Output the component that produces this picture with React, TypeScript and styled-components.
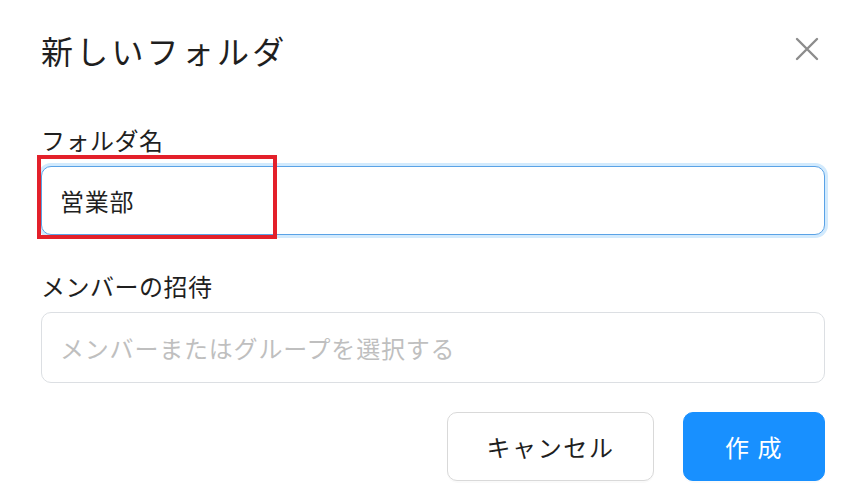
import styled, { createGlobalStyle } from 'styled-components';

const GlobalStyle = createGlobalStyle`
    html, body {
        margin: 0;
        padding: 0;
        background: #ffffff;
    }
    body {
        font-family: "Noto Sans CJK JP", "Noto Sans", sans-serif;
        color: rgba(0, 0, 0, 0.88);
    }
`;

const CloseIcon = () => (
    <svg width="24" height="24" viewBox="0 0 24 24" fill="none">
        <path d="M2 2L22 22M22 2L2 22" stroke="#8c8c8c" strokeWidth="2.4" strokeLinecap="round" />
    </svg>
);

export default function App() {
    return (
        <>
            <GlobalStyle />
            <ModalWrap>
                <Header>
                    <Title>新しいフォルダ</Title>
                    <CloseButton aria-label="閉じる">
                        <CloseIcon />
                    </CloseButton>
                </Header>
                <Field>
                    <Label>フォルダ名</Label>
                    <InputBox>
                        <TextInput $focused defaultValue="営業部" />
                        <Highlight />
                    </InputBox>
                </Field>
                <Field $gap={34}>
                    <Label>メンバーの招待</Label>
                    <InputBox>
                        <TextInput $tall placeholder="メンバーまたはグループを選択する" />
                    </InputBox>
                </Field>
                <Footer>
                    <Button>キャンセル</Button>
                    <Button $primary>作 成</Button>
                </Footer>
            </ModalWrap>
        </>
    );
}

const ModalWrap = styled.div`
    width: 863px;
    height: 502px;
    box-sizing: border-box;
    padding: 0 38px 0 41px;
    display: flex;
    flex-direction: column;
`;

const Header = styled.header`
    display: flex;
    align-items: center;
    justify-content: space-between;
    height: 44px;
    margin-top: 28px;
    margin-bottom: 51px;
`;

const Title = styled.h1`
    margin: 0;
    font-size: 32px;
    font-weight: 400;
    line-height: 44px;
    letter-spacing: 3.2px;
    color: #1f1f1f;
`;

const CloseButton = styled.button`
    border: none;
    background: transparent;
    padding: 0;
    margin-right: 6px;
    margin-top: -2px;
    width: 24px;
    height: 24px;
    display: flex;
    cursor: pointer;
`;

const Field = styled.div<{ $gap?: number }>`
    display: flex;
    flex-direction: column;
    gap: 9px;
    margin-top: ${(p) => p.$gap ?? 0}px;
`;

const Label = styled.label`
    font-size: 24px;
    line-height: 34px;
    letter-spacing: 0.5px;
    color: #1f1f1f;
`;

const InputBox = styled.div`
    position: relative;
`;

const TextInput = styled.input<{ $focused?: boolean; $tall?: boolean }>`
    width: 100%;
    box-sizing: border-box;
    height: ${(p) => (p.$tall ? 71 : 69)}px;
    padding: 0 18px;
    font-family: "Noto Sans CJK JP", "Noto Sans", sans-serif;
    font-size: 24px;
    letter-spacing: 0.8px;
    color: #1f1f1f;
    border-radius: 10px;
    border: 1px solid ${(p) => (p.$focused ? '#5aa2e6' : '#dcdfe3')};
    box-shadow: ${(p) => (p.$focused ? '0 0 0 3px #d2eafd' : 'none')};
    outline: none;
    background: #fff;

    &::placeholder {
        color: #bfbfbf;
    }
`;

const Highlight = styled.div`
    position: absolute;
    left: -4px;
    top: -11px;
    width: 240px;
    height: 84px;
    box-sizing: border-box;
    border: 4.5px solid #e3202a;
    pointer-events: none;
`;

const Footer = styled.footer`
    display: flex;
    justify-content: flex-end;
    gap: 29px;
    margin-top: 29px;
`;

const Button = styled.button<{ $primary?: boolean }>`
    height: 69px;
    width: ${(p) => (p.$primary ? 142 : 207)}px;
    box-sizing: border-box;
    border-radius: 10px;
    font-family: "Noto Sans CJK JP", "Noto Sans", sans-serif;
    font-size: 24px;
    letter-spacing: 1.6px;
    cursor: pointer;
    border: 1px solid ${(p) => (p.$primary ? '#1890ff' : '#d9d9d9')};
    background: ${(p) => (p.$primary ? '#1890ff' : '#ffffff')};
    color: ${(p) => (p.$primary ? '#ffffff' : '#1f1f1f')};
    box-shadow: 0 2px 0 rgba(0, 0, 0, 0.02);
`;
